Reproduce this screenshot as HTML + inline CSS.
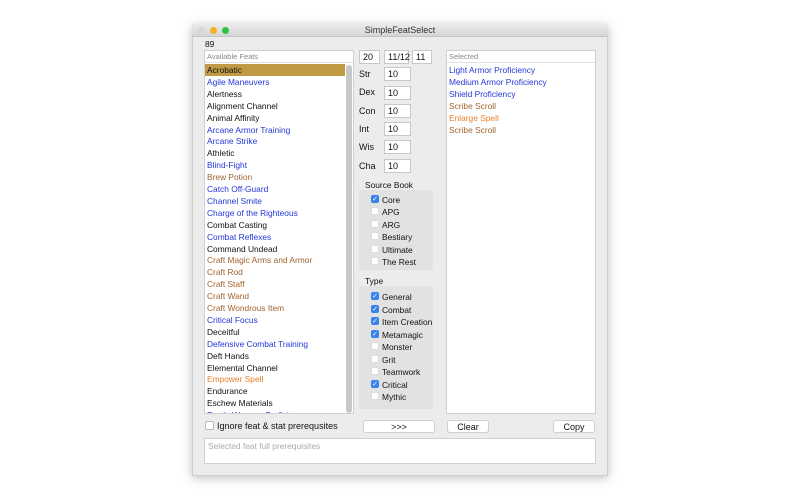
<!DOCTYPE html>
<html><head><style>
*{margin:0;padding:0;box-sizing:border-box}
body{width:800px;height:500px;background:#fff;position:relative;font-family:"Liberation Sans",sans-serif;font-size:8.4px;color:#111;overflow:hidden}
.a{position:absolute}
.win{left:192px;top:24px;width:416px;height:452px;background:#ececec;border:1px solid #cfcfcf;box-shadow:0 2px 10px rgba(0,0,0,.25)}
.title{left:192px;top:24px;width:416px;height:13px;background:linear-gradient(#ebebeb,#d6d6d6);border-bottom:1px solid #c4c4c4;text-align:center;font-size:9px;line-height:13px;color:#333}
.dot{width:7px;height:7px;border-radius:50%;top:27px}
.list{background:#fff;border:1px solid #d0d0d0}
.row{position:absolute;left:2px;height:12px;line-height:12px;white-space:nowrap}
.b{color:#2238d8}.br{color:#a26330}.or{color:#e8832a}
.box{background:#fff;border:1px solid #c8c8c8;height:14px;line-height:13px;padding-left:3px;font-size:9px}
.lbl{font-size:9px}
.cb{width:8px;height:8px;border-radius:2px;background:#fff;border:1px solid #ddd}
.cb.on{background:#3b82e8;border-color:#3b82e8;color:#fff;font-size:7px;line-height:7px;text-align:center}
.grp{background:#e2e2e2;border-radius:2px}
.btn{background:#fff;border:1px solid #cfcfcf;border-radius:3px;text-align:center;height:13px;line-height:12px;font-size:9px}
</style></head><body>
<div class="a win"></div>
<div class="a title">SimpleFeatSelect</div>
<div class="a dot" style="left:198px;background:#d8d8d8"></div>
<div class="a dot" style="left:210px;background:#f5b127"></div>
<div class="a dot" style="left:222px;background:#2fc23d"></div>
<div class="a" style="left:205px;top:39px">89</div>

<div class="a list" style="left:204px;top:50px;width:150px;height:364px;overflow:hidden">
<div class="a" style="left:2px;top:1px;color:#888;font-size:7.5px">Available Feats</div>
<div class="a" style="left:0;top:11px;width:148px;border-top:1px solid #e0e0e0"></div>
<div class="a" style="left:0;top:13px;width:140px;height:12px;background:#c19a45"></div>
<div class="a" style="left:141px;top:14px;width:6px;height:348px;background:#c8c8c8;border-radius:3px"></div>
<div class="row" style="top:13px">Acrobatic</div>
<div class="row b" style="top:25px">Agile Maneuvers</div>
<div class="row" style="top:37px">Alertness</div>
<div class="row" style="top:49px">Alignment Channel</div>
<div class="row" style="top:61px">Animal Affinity</div>
<div class="row b" style="top:73px">Arcane Armor Training</div>
<div class="row b" style="top:84px">Arcane Strike</div>
<div class="row" style="top:96px">Athletic</div>
<div class="row b" style="top:108px">Blind-Fight</div>
<div class="row br" style="top:120px">Brew Potion</div>
<div class="row b" style="top:132px">Catch Off-Guard</div>
<div class="row b" style="top:144px">Channel Smite</div>
<div class="row b" style="top:156px">Charge of the Righteous</div>
<div class="row" style="top:168px">Combat Casting</div>
<div class="row b" style="top:180px">Combat Reflexes</div>
<div class="row" style="top:192px">Command Undead</div>
<div class="row br" style="top:203px">Craft Magic Arms and Armor</div>
<div class="row br" style="top:215px">Craft Rod</div>
<div class="row br" style="top:227px">Craft Staff</div>
<div class="row br" style="top:239px">Craft Wand</div>
<div class="row br" style="top:251px">Craft Wondrous Item</div>
<div class="row b" style="top:263px">Critical Focus</div>
<div class="row" style="top:275px">Deceitful</div>
<div class="row b" style="top:287px">Defensive Combat Training</div>
<div class="row" style="top:299px">Deft Hands</div>
<div class="row" style="top:311px">Elemental Channel</div>
<div class="row or" style="top:322px">Empower Spell</div>
<div class="row" style="top:334px">Endurance</div>
<div class="row" style="top:346px">Eschew Materials</div>
<div class="row b" style="top:358px">Exotic Weapon Proficiency</div>
</div>

<div class="a box" style="left:359px;top:50px;width:21px">20</div>
<div class="a box" style="left:384px;top:50px;width:25px">11/12</div>
<div class="a box" style="left:412px;top:50px;width:20px">11</div>
<div class="a lbl" style="left:359px;top:69px">Str</div><div class="a box" style="left:384px;top:67px;width:27px">10</div>
<div class="a lbl" style="left:359px;top:87px">Dex</div><div class="a box" style="left:384px;top:86px;width:27px">10</div>
<div class="a lbl" style="left:359px;top:106px">Con</div><div class="a box" style="left:384px;top:104px;width:27px">10</div>
<div class="a lbl" style="left:359px;top:124px">Int</div><div class="a box" style="left:384px;top:122px;width:27px">10</div>
<div class="a lbl" style="left:359px;top:142px">Wis</div><div class="a box" style="left:384px;top:140px;width:27px">10</div>
<div class="a lbl" style="left:359px;top:161px">Cha</div><div class="a box" style="left:384px;top:159px;width:27px">10</div>

<div class="a" style="left:365px;top:180px">Source Book</div>
<div class="a grp" style="left:359px;top:190px;width:74px;height:80px"></div>
<div class="a" style="left:365px;top:276px">Type</div>
<div class="a grp" style="left:359px;top:286px;width:74px;height:123px"></div>

<div class="a cb on" style="left:371px;top:195px">✓</div><div class="a" style="left:382px;top:195px">Core</div>
<div class="a cb" style="left:371px;top:207px"></div><div class="a" style="left:382px;top:207px">APG</div>
<div class="a cb" style="left:371px;top:220px"></div><div class="a" style="left:382px;top:220px">ARG</div>
<div class="a cb" style="left:371px;top:232px"></div><div class="a" style="left:382px;top:232px">Bestiary</div>
<div class="a cb" style="left:371px;top:245px"></div><div class="a" style="left:382px;top:245px">Ultimate</div>
<div class="a cb" style="left:371px;top:257px"></div><div class="a" style="left:382px;top:257px">The Rest</div>

<div class="a cb on" style="left:371px;top:292px">✓</div><div class="a" style="left:382px;top:292px">General</div>
<div class="a cb on" style="left:371px;top:305px">✓</div><div class="a" style="left:382px;top:305px">Combat</div>
<div class="a cb on" style="left:371px;top:317px">✓</div><div class="a" style="left:382px;top:317px">Item Creation</div>
<div class="a cb on" style="left:371px;top:330px">✓</div><div class="a" style="left:382px;top:330px">Metamagic</div>
<div class="a cb" style="left:371px;top:342px"></div><div class="a" style="left:382px;top:342px">Monster</div>
<div class="a cb" style="left:371px;top:355px"></div><div class="a" style="left:382px;top:355px">Grit</div>
<div class="a cb" style="left:371px;top:367px"></div><div class="a" style="left:382px;top:367px">Teamwork</div>
<div class="a cb on" style="left:371px;top:380px">✓</div><div class="a" style="left:382px;top:380px">Critical</div>
<div class="a cb" style="left:371px;top:392px"></div><div class="a" style="left:382px;top:392px">Mythic</div>

<div class="a list" style="left:446px;top:50px;width:150px;height:364px">
<div class="a" style="left:2px;top:1px;color:#888;font-size:7.5px">Selected</div>
<div class="a" style="left:0;top:11px;width:148px;border-top:1px solid #e0e0e0"></div>
<div class="row b" style="top:13px">Light Armor Proficiency</div>
<div class="row b" style="top:25px">Medium Armor Proficiency</div>
<div class="row b" style="top:37px">Shield Proficiency</div>
<div class="row br" style="top:49px">Scribe Scroll</div>
<div class="row or" style="top:61px">Enlarge Spell</div>
<div class="row br" style="top:73px">Scribe Scroll</div>
</div>

<div class="a cb" style="left:205px;top:421px;width:9px;height:9px;border-color:#bbb"></div>
<div class="a lbl" style="left:217px;top:421px">Ignore feat &amp; stat prerequsites</div>
<div class="a btn" style="left:363px;top:420px;width:72px">&gt;&gt;&gt;</div>
<div class="a btn" style="left:447px;top:420px;width:42px">Clear</div>
<div class="a btn" style="left:553px;top:420px;width:42px">Copy</div>
<div class="a" style="left:204px;top:438px;width:392px;height:26px;background:#fff;border:1px solid #d0d0d0;color:#aaa;padding:2px 3px">Selected feat full prerequisites</div>
</body></html>
